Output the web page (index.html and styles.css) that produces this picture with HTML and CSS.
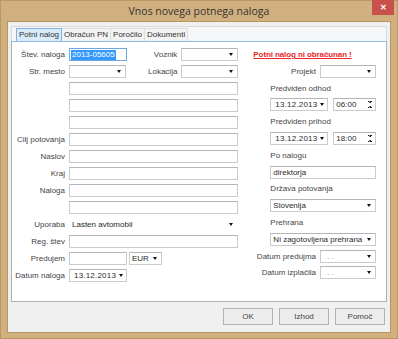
FILE: index.html
```html
<!DOCTYPE html>
<html lang="sl">
  <head>
    <meta charset="UTF-8" />
    <title>Vnos novega potnega naloga</title>
    <link rel="stylesheet" href="styles.css">
  </head>
  <body>
    <div class="window">
      <div class="titlebar">
        <span></span>
        <span class="title">Vnos novega potnega naloga</span>
        <span class="close">&#x2715;</span>
      </div>
      <div class="client">
        <div class="tabctl">
          <div class="tabs">
            <span class="tab active">Potni nalog</span>
            <span class="tab">Obračun PN</span>
            <span class="tab">Poročilo</span>
            <span class="tab">Dokumenti</span>
          </div>
          <div class="page">
            <div class="col-left">
              <div class="row">
                <label class="lbl">Štev. naloga</label>
                <span class="field w58 focus"><span class="sel">2013-05605</span></span>
                <label class="lbl grow">Voznik</label>
                <span class="field combo w57"><span class="txt"></span><i class="arrow"></i></span>
              </div>
              <div class="row">
                <label class="lbl">Str. mesto</label>
                <span class="field combo w57"><span class="txt"></span><i class="arrow"></i></span>
                <label class="lbl grow">Lokacija</label>
                <span class="field combo w57"><span class="txt"></span><i class="arrow"></i></span>
              </div>
              <div class="row"><label class="lbl"></label><span class="field grow"></span></div>
              <div class="row"><label class="lbl"></label><span class="field grow"></span></div>
              <div class="row"><label class="lbl"></label><span class="field grow"></span></div>
              <div class="row"><label class="lbl">Cilj potovanja</label><span class="field grow"></span></div>
              <div class="row"><label class="lbl">Naslov</label><span class="field grow"></span></div>
              <div class="row"><label class="lbl">Kraj</label><span class="field grow"></span></div>
              <div class="row"><label class="lbl">Naloga</label><span class="field grow"></span></div>
              <div class="row"><label class="lbl"></label><span class="field grow"></span></div>
              <div class="row">
                <label class="lbl">Uporaba</label>
                <span class="field combo flat grow"><span class="txt">Lasten avtomobil</span><i class="arrow"></i></span>
              </div>
              <div class="row"><label class="lbl">Reg. štev</label><span class="field grow"></span></div>
              <div class="row">
                <label class="lbl">Predujem</label>
                <span class="field w58"></span>
                <span class="field combo w33"><span class="txt">EUR</span><i class="arrow"></i></span>
              </div>
              <div class="row">
                <label class="lbl">Datum naloga</label>
                <span class="field combo w58"><span class="txt date">13.12.2013</span><i class="arrow"></i></span>
              </div>
            </div>
            <div class="col-right">
              <div class="row"><span class="warn">Potni nalog ni obračunan !</span></div>
              <div class="row">
                <label class="lbl grow">Projekt</label>
                <span class="field combo w56"><span class="txt"></span><i class="arrow"></i></span>
              </div>
              <div class="row"><span class="cap">Predviden odhod</span></div>
              <div class="row ind">
                <span class="field combo w58"><span class="txt date">13.12.2013</span><i class="arrow"></i></span>
                <span class="field spin grow"><span class="txt">06:00</span><i class="updown"></i></span>
              </div>
              <div class="row"><span class="cap">Predviden prihod</span></div>
              <div class="row ind">
                <span class="field combo w58"><span class="txt date">13.12.2013</span><i class="arrow"></i></span>
                <span class="field spin grow"><span class="txt">18:00</span><i class="updown"></i></span>
              </div>
              <div class="row"><span class="cap">Po nalogu</span></div>
              <div class="row ind"><span class="field grow"><span class="txt">direktorja</span></span></div>
              <div class="row"><span class="cap">Država potovanja</span></div>
              <div class="row ind">
                <span class="field combo grow"><span class="txt">Slovenija</span><i class="arrow"></i></span>
              </div>
              <div class="row"><span class="cap">Prehrana</span></div>
              <div class="row ind">
                <span class="field combo grow"><span class="txt">Ni zagotovljena prehrana</span><i class="arrow"></i></span>
              </div>
              <div class="row">
                <label class="lbl grow">Datum predujma</label>
                <span class="field combo w56"><span class="txt dots">. .</span><i class="arrow"></i></span>
              </div>
              <div class="row">
                <label class="lbl grow">Datum izplačila</label>
                <span class="field combo w56"><span class="txt dots">. .</span><i class="arrow"></i></span>
              </div>
            </div>
          </div>
        </div>
        <div class="buttons">
          <button type="button">OK</button>
          <button type="button">Izhod</button>
          <button type="button">Pomoč</button>
        </div>
      </div>
    </div>
  </body>
</html>
```

FILE: styles.css
```css
* {
  box-sizing: border-box;
}
body {
  margin: 0;
  font-family: "Liberation Sans", Arial, sans-serif;
  font-size: 8px;
  color: #444;
}
.window {
  width: 398px;
  height: 339px;
  background-color: #d1b080;
  box-shadow: inset 0 0 0 1px #bb9862;
  display: flex;
  flex-direction: column;
}
.titlebar {
  height: 22px;
  display: grid;
  grid-template-columns: 1fr auto 1fr;
}
.title {
  font-family: "Open Sans", sans-serif;
  font-size: 10.5px;
  color: #333;
  padding-top: 4px;
}
.close {
  justify-self: end;
  width: 22px;
  height: 15px;
  margin-right: 4px;
  background-color: #c9514b;
  color: #fff;
  font-size: 8px;
  font-weight: bold;
  display: flex;
  justify-content: center;
  align-items: center;
}
.client {
  margin: 0 8px 7px 8px;
  flex: 1;
  background-color: #f0f0f0;
  box-shadow: 0 0 0 1px #b8965f;
  display: flex;
  flex-direction: column;
}
.tabctl {
  margin: 4px 3px 0 3px;
  height: 276px;
  display: flex;
  flex-direction: column;
}
.tabs {
  height: 15px;
  display: flex;
  align-items: flex-end;
  padding-left: 4px;
  background-color: #f5f6f7;
  border: 1px solid #dadada;
  border-bottom: none;
}
.tab {
  height: 13px;
  padding: 0 2px;
  line-height: 12px;
  color: #333;
  border: 1px solid #dcdcdc;
  border-bottom: none;
  margin-right: -1px;
  background-color: #f3f3f3;
}
.tab.active {
  background-color: #d9ebfa;
  border-color: #7eb4ea;
  position: relative;
  z-index: 1;
}
.page {
  flex: 1;
  background-color: #fff;
  border: 1px solid #b0b0b0;
  border-top: 1px solid #8fbbe8;
  padding: 6px 10px 0 0;
  display: flex;
  gap: 12px;
}
.col-left {
  width: 227px;
  display: flex;
  flex-direction: column;
  gap: 4px;
}
.col-right {
  width: 126px;
  display: flex;
  flex-direction: column;
  gap: 3.8px;
}
.row {
  height: 13px;
  display: flex;
  align-items: center;
  gap: 4px;
}
.row.ind {
  padding-left: 20px;
  gap: 5px;
}
.lbl {
  width: 53px;
  text-align: right;
  color: #444;
  white-space: nowrap;
}
.lbl.grow {
  width: auto;
}
.grow {
  flex: 1;
}
.cap {
  padding-left: 20px;
  color: #444;
}
.warn {
  margin-left: 3px;
  color: #e8262a;
  font-weight: bold;
  text-decoration: underline;
  letter-spacing: -0.1px;
}
.field {
  height: 13px;
  background-color: #fff;
  border: 1px solid #c9cbcf;
  border-top-color: #b3b5ba;
  display: flex;
  align-items: center;
  color: #2a2a2a;
  overflow: hidden;
}
.w58 { width: 58px; }
.w57 { width: 57px; }
.w56 { width: 56px; }
.w33 { width: 33px; margin-left: -2px; }
.field.focus {
  border-color: #6fa6e0;
  padding-left: 1px;
}
.sel {
  background-color: #3399ff;
  color: #fff;
  padding: 0 1px;
  line-height: 10px;
}
.txt {
  flex: 1;
  padding-left: 2px;
  white-space: nowrap;
}
.txt.date {
  padding-left: 4px;
  letter-spacing: 0.2px;
}
.txt.dots {
  padding-left: 6px;
  color: #888;
}
.field.flat {
  border-color: #fff;
}
.arrow {
  width: 0;
  height: 0;
  margin: 0 4px 0 3px;
  border-left: 2.5px solid transparent;
  border-right: 2.5px solid transparent;
  border-top: 3px solid #111;
}
.updown {
  width: 5px;
  height: 7px;
  margin-right: 3px;
  background:
    linear-gradient(45deg, transparent 50%, #222 50%) 0 0 / 2.5px 2px no-repeat,
    linear-gradient(-45deg, transparent 50%, #222 50%) 2.5px 0 / 2.5px 2px no-repeat,
    linear-gradient(135deg, transparent 50%, #222 50%) 0 5px / 2.5px 2px no-repeat,
    linear-gradient(-135deg, transparent 50%, #222 50%) 2.5px 5px / 2.5px 2px no-repeat;
}
.buttons {
  margin: 6px 5px 0 0;
  display: flex;
  justify-content: flex-end;
  gap: 6px;
}
button {
  width: 50px;
  height: 17px;
  font-family: "Liberation Sans", Arial, sans-serif;
  font-size: 8px;
  color: #444;
  background-color: #ececec;
  border: 1px solid #b3b3b3;
  padding: 0;
}
```
